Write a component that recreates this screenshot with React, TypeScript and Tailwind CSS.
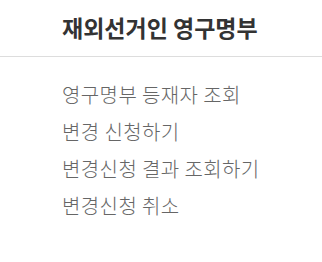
export default function App() {
  const items = ["영구명부 등재자 조회", "변경 신청하기", "변경신청 결과 조회하기", "변경신청 취소"]

  return (
    <div className="w-[322px] h-[262px] bg-white font-['Noto_Sans_CJK_KR',sans-serif]">
      {/* Title */}
      <div className="h-[57px] border-b border-[#dddddd] pl-[62px] pt-[11px]">
        <h1 className="text-[23px] leading-[32px] font-bold text-[#333333]">재외선거인 영구명부</h1>
      </div>

      {/* Menu */}
      <ul className="pl-[62px] pt-[25px] flex flex-col gap-[11px]">
        {items.map((item) => (
          <li key={item} className="text-[20px] leading-[26px] font-light tracking-[0.4px] text-[#666666]">
            {item}
          </li>
        ))}
      </ul>
    </div>
  )
}
